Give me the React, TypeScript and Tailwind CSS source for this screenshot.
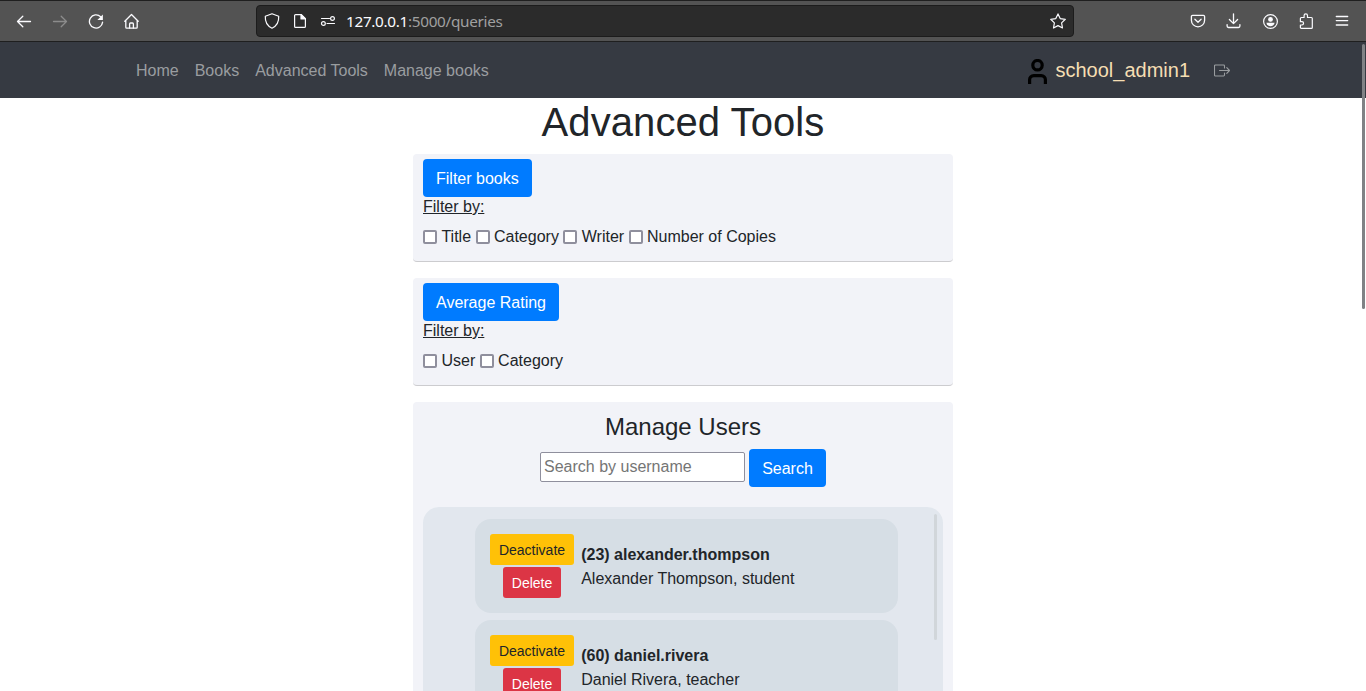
import React from "react";

function BrowserBar() {
  return (
    <div className="flex h-[42px] items-center border-t border-b border-t-[#1f1f1f] border-b-[#1f1f1f] bg-[#535353] text-[#fbfbfe]">
      <div className="flex w-[256px] shrink-0 items-center gap-5 pl-4">
        <svg width="16" height="16" viewBox="0 -0.5 16 16" fill="none" stroke="currentColor" strokeWidth="1.3" strokeLinecap="round" strokeLinejoin="round">
          <path d="M14.5 8H1.5M6.8 2.7L1.5 8l5.3 5.3" />
        </svg>
        <svg className="text-[#8c8c8c]" width="16" height="16" viewBox="0 -0.5 16 16" fill="none" stroke="currentColor" strokeWidth="1.3" strokeLinecap="round" strokeLinejoin="round">
          <path d="M1.5 8h13M9.2 2.7L14.5 8l-5.3 5.3" />
        </svg>
        <svg width="16" height="16" viewBox="0 -0.5 16 16" fill="none" stroke="currentColor" strokeWidth="1.3" strokeLinecap="round">
          <path d="M12.6 3.2A6.6 6.6 0 1 0 14.6 8.6" />
          <path d="M14.9 1v5.5H9.4z" fill="currentColor" stroke="none" />
        </svg>
        <svg width="16" height="16" viewBox="0.5 -0.5 16 16" fill="none" stroke="currentColor" strokeWidth="1.3" strokeLinecap="round" strokeLinejoin="round">
          <path d="M1.3 7.7L8 1l6.7 6.7M2.3 7v6.7c0 .5.4.9.9.9h9.6c.5 0 .9-.4.9-.9V7" />
          <path d="M6.1 14.5v-4.1c0-.5.4-.9.9-.9h2c.5 0 .9.4.9.9v4.1" />
        </svg>
      </div>
      <div className="flex h-8 w-[818px] shrink-0 items-center rounded border border-[#1c1c1c] bg-[#2b2b2b] px-[7px]">
        <svg width="16" height="16" viewBox="0 0 16 16" fill="none" stroke="currentColor" strokeWidth="1.2" strokeLinejoin="round">
          <path d="M8 .8L1.3 3.3C1 8.8 3.2 13 8 15.2c4.8-2.200 7-6.400 6.700-11.900z" />
        </svg>
        <svg className="ml-3" width="16" height="16" viewBox="0 0 16 16" fill="none" stroke="currentColor" strokeWidth="1.2" strokeLinejoin="round">
          <path d="M9.400 1.600H3.600a1 1 0 0 0-1 1v10.800a1 1 0 0 0 1 1h8.800a1 1 0 0 0 1-1V5.600z" />
          <path d="M9 1.600v4.400h4.400z" fill="currentColor" />
        </svg>
        <svg className="ml-3" width="16" height="16" viewBox="0 0 16 16" fill="none" stroke="currentColor" strokeWidth="1.2" strokeLinecap="round">
          <path d="M1.500 5.500h8M7 10.500h7.500" />
          <circle cx="12.500" cy="5.500" r="1.900" />
          <circle cx="3.400" cy="10.500" r="1.900" />
        </svg>
        <span className="ml-[10px] font-['Noto_Sans',sans-serif] text-[15.3px] leading-5 tracking-[-0.31px] text-[#a0a0a0]">
          <span className="text-[#fbfbfe]">127.0.0.1</span>:5000/queries
        </span>
        <svg className="ml-auto" width="16" height="16" viewBox="0 0 16 16" fill="none" stroke="currentColor" strokeWidth="1.2" strokeLinejoin="round">
          <path d="M8 .9l2.200 4.700 5.100.7-3.700 3.600.9 5.100L8 12.600 3.500 15l.9-5.100L.7 6.300l5.100-.7z" />
        </svg>
      </div>
      <div className="ml-auto flex items-center gap-5 pr-4">
        <svg width="16" height="16" viewBox="0 0 16 16" fill="none" stroke="currentColor" strokeWidth="1.3" strokeLinecap="round" strokeLinejoin="round">
          <path d="M2.600 2.300h10.800c.7 0 1.200.5 1.200 1.200v3.700a6.600 6.600 0 0 1-13.200 0V3.500c0-.7.500-1.200 1.200-1.200z" />
          <path d="M4.900 6.300L8 9.200l3.100-2.900" />
        </svg>
        <svg width="16" height="16" viewBox="0.5 0 16 16" fill="none" stroke="currentColor" strokeWidth="1.3" strokeLinecap="round" strokeLinejoin="round">
          <path d="M8 .8v9.700M3.900 6.500L8 10.600l4.100-4.100M1.600 11.600v1.500c0 .8.600 1.400 1.400 1.400h10c.8 0 1.400-.6 1.400-1.400v-1.500" />
        </svg>
        <svg width="16" height="16" viewBox="-0.5 -0.5 16 16" fill="none" stroke="currentColor" strokeWidth="1.2">
          <circle cx="8" cy="8" r="6.900" />
          <circle cx="8" cy="5.900" r="2.400" fill="currentColor" stroke="none" />
          <path d="M3.900 9.300h8.200c-.3 2.200-2 3.500-4.100 3.500s-3.800-1.300-4.100-3.500z" fill="currentColor" stroke="none" />
        </svg>
        <svg width="16" height="16" viewBox="0 0 16 16" fill="none" stroke="currentColor" strokeWidth="1.2" strokeLinejoin="round">
          <path d="M6.100 4.500V2.600a1.700 1.700 0 0 1 3.400 0v1.900h3.900c.5 0 .9.4.9.9v9c0 .5-.4.9-.9.9H3.300c-.5 0-.9-.4-.9-.9V12h1.500a1.600 1.600 0 0 0 0-3.300H2.400V5.400c0-.5.4-.9.9-.9z" />
        </svg>
        <svg width="16" height="16" viewBox="0 0 16 16" fill="none" stroke="currentColor" strokeWidth="1.3" strokeLinecap="round">
          <path d="M2.300 3.500h11.400M2.300 7.600h11.400M2.300 12h11.400" />
        </svg>
      </div>
    </div>
  );
}

function Navbar() {
  return (
    <nav className="flex h-14 items-center bg-[#363a42] px-[136px] text-[#9a9da0]">
      <div className="flex gap-4 pt-0.5">
        <a>Home</a>
        <a>Books</a>
        <a>Advanced Tools</a>
        <a>Manage books</a>
      </div>
      <div className="ml-auto flex items-center">
        <svg className="mt-1" width="20" height="26" viewBox="-0.5 0.5 20 26" fill="none" stroke="#000" strokeWidth="3.2">
          <circle cx="10" cy="6.700" r="4.700" />
          <path d="M2.100 25.500v-4.200c0-2.500 1.700-4.200 4.200-4.200h7.400c2.500 0 4.200 1.700 4.200 4.200v4.200" />
        </svg>
        <span className="ml-2 text-xl leading-[30px] text-[#f5deb3]">school_admin1</span>
        <svg className="mt-0.5 ml-6" width="16" height="14" viewBox="0 0.5 16 14" fill="none" stroke="currentColor" strokeWidth="1.1" strokeLinecap="round" strokeLinejoin="round">
          <path d="M10.500 4.500V2.400a.9.900 0 0 0-.9-.9H1.400a.9.900 0 0 0-.9.900v9.200a.9.900 0 0 0 .9.900h8.200a.9.900 0 0 0 .9-.9V9.500M5.500 7h10M12.800 4.200L15.500 7l-2.700 2.800" />
        </svg>
      </div>
    </nav>
  );
}

function FilterCard({ title, options }: { title: string; options: string[] }) {
  return (
    <section className="mb-4 h-[108px] rounded border-b border-[#cccccf] bg-[#f2f3f8] px-[10px] pt-[5px]">
      <button className="block h-[38px] rounded bg-[#007bff] px-[13px] pt-0.5 text-white">{title}</button>
      <div className="leading-5 underline">Filter by:</div>
      <div className="mt-2 flex h-6 items-center gap-[4.45px]">
        {options.map((name) => (
          <label key={name} className="flex items-center gap-[4.45px]">
            <input type="checkbox" className="size-[14px] appearance-none rounded-[2px] border-2 border-[#8f8f9d] bg-white" />
            {name}
          </label>
        ))}
      </div>
    </section>
  );
}

function UserRow({ id, username, name, role }: { id: number; username: string; name: string; role: string }) {
  return (
    <div className="flex h-[94px] shrink-0 items-center rounded-2xl bg-[#d6dee5] pl-[15px]">
      <div className="flex w-[84px] flex-col items-center gap-0.5 text-sm">
        <button className="h-[31px] w-[84px] rounded-[3px] bg-[#ffc107] text-[#212529]">Deactivate</button>
        <button className="h-[31px] w-[58px] rounded-[3px] bg-[#dc3545] text-white">Delete</button>
      </div>
      <div className="ml-[7.2px] pt-0.5">
        <div className="font-bold">({id}) {username}</div>
        <div>{name}, {role}</div>
      </div>
    </div>
  );
}

function ManageUsers() {
  return (
    <section className="h-[289px] rounded-t bg-[#f2f3f8] px-[10px] pt-[10px]">
      <h2 className="text-center text-2xl leading-[29px]">Manage Users</h2>
      <div className="mt-2 flex justify-center gap-1">
        <input
          className="mt-[3px] h-[30px] w-[205px] rounded-[2px] border border-[#8f8f9d] bg-white px-[3px] placeholder:text-[#757575]"
          placeholder="Search by username"
        />
        <button className="h-[38px] w-[77px] rounded bg-[#007bff] pt-0.5 text-white">Search</button>
      </div>
      <div className="relative mt-5 flex h-[184px] flex-col gap-[7px] overflow-hidden rounded-t-2xl bg-[#e2e7ee] pt-3 pr-[45px] pl-[52px]">
        <UserRow id={23} username="alexander.thompson" name="Alexander Thompson" role="student" />
        <UserRow id={60} username="daniel.rivera" name="Daniel Rivera" role="teacher" />
        <div className="absolute top-[7px] right-[6px] h-[126px] w-[3px] rounded-full bg-[#d1d6da]" />
      </div>
    </section>
  );
}

export default function App() {
  return (
    <div className="relative h-[691px] overflow-hidden bg-white font-['Liberation_Sans',Arial,sans-serif] text-base leading-6 text-[#212529]">
      <BrowserBar />
      <Navbar />
      <main className="mx-auto w-[540px]">
        <h1 className="mb-2 text-center text-[40px] leading-12 tracking-[0.08px]">Advanced Tools</h1>
        <FilterCard title="Filter books" options={["Title", "Category", "Writer", "Number of Copies"]} />
        <FilterCard title="Average Rating" options={["User", "Category"]} />
        <ManageUsers />
      </main>
      <div className="absolute top-[44px] right-[1px] h-[265px] w-[3px] rounded-full bg-[#808285]" />
    </div>
  );
}
